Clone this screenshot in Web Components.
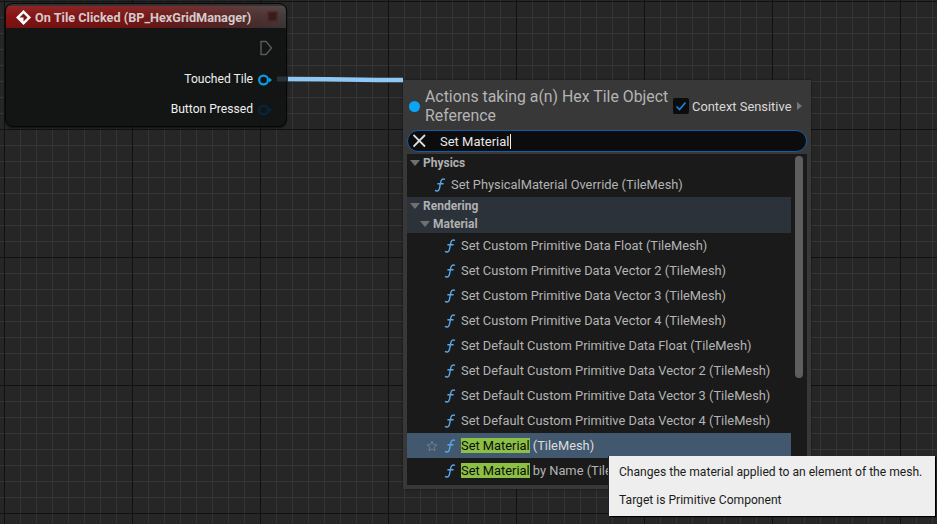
<!DOCTYPE html>
<html>
<head>
<meta charset="utf-8">
<title>Blueprint graph</title>
<style>
  html, body { margin: 0; height: 100%; background: #262626; overflow: hidden; }
</style>
</head>
<body>
<graph-canvas>
  <event-node title="On Tile Clicked (BP_HexGridManager)">
    <node-pin kind="exec"></node-pin>
    <node-pin kind="linked">Touched Tile</node-pin>
    <node-pin kind="dim">Button Pressed</node-pin>
  </event-node>
  <action-menu heading="Actions taking a(n) Hex Tile Object Reference" query="Set Material">
    <action-category label="Physics"></action-category>
    <action-row indent="1" label="Set PhysicalMaterial Override (TileMesh)"></action-row>
    <action-category label="Rendering" active></action-category>
    <action-category label="Material" level="1" active></action-category>
    <action-row label="Set Custom Primitive Data Float (TileMesh)"></action-row>
    <action-row label="Set Custom Primitive Data Vector 2 (TileMesh)"></action-row>
    <action-row label="Set Custom Primitive Data Vector 3 (TileMesh)"></action-row>
    <action-row label="Set Custom Primitive Data Vector 4 (TileMesh)"></action-row>
    <action-row label="Set Default Custom Primitive Data Float (TileMesh)"></action-row>
    <action-row label="Set Default Custom Primitive Data Vector 2 (TileMesh)"></action-row>
    <action-row label="Set Default Custom Primitive Data Vector 3 (TileMesh)"></action-row>
    <action-row label="Set Default Custom Primitive Data Vector 4 (TileMesh)"></action-row>
    <action-row selected match="Set Material" label=" (TileMesh)"></action-row>
    <action-row match="Set Material" label=" by Name (TileMesh)"></action-row>
  </action-menu>
  <hover-tip>
    <span>Changes the material applied to an element of the mesh.</span>
    <span>Target is Primitive Component</span>
  </hover-tip>
</graph-canvas>

<script>
// fondo del grafo: rejilla de 16px con lineas mayores cada 128px
class GraphCanvas extends HTMLElement {
  constructor() {
    super();
    this.attachShadow({ mode: 'open' }).innerHTML = `
      <style>
        :host {
          display: block; position: relative; width: 937px; height: 524px; overflow: hidden;
          font-family: Roboto, "Liberation Sans", sans-serif;
          background-color: #262626;
          background-image:
            linear-gradient(90deg, #111 1px, transparent 1px),
            linear-gradient(#111 1px, transparent 1px),
            linear-gradient(90deg, #353535 1px, transparent 1px),
            linear-gradient(#353535 1px, transparent 1px);
          background-size: 128px 128px, 128px 128px, 16px 16px, 16px 16px;
          background-position: 4px 1px, 4px 1px, 4px 1px, 4px 1px;
        }
        svg { position: absolute; left: 0; top: 0; z-index: 1; pointer-events: none; }
      </style>
      <slot></slot>
      <svg width="937" height="524">
        <path d="M277 79 H288" stroke="#26323c" stroke-width="5" fill="none"/>
        <path d="M288 79 C330 79 360 80 403 80" stroke="#8fc8f5" stroke-width="4.5" fill="none"/>
      </svg>`;
  }
}

class EventNode extends HTMLElement {
  constructor() {
    super();
    this.attachShadow({ mode: 'open' }).innerHTML = `
      <style>
        :host {
          display: block; position: absolute; left: 5px; top: 3px; width: 282px; height: 124px;
          box-sizing: border-box; background: #131514; border: 1px solid #070707; border-radius: 8px;
          box-shadow: 0 1px 2px rgba(0,0,0,.6); overflow: hidden; color: #f0f0f0;
        }
        .head {
          display: flex; align-items: center; height: 22px; margin-top: 2px; padding-left: 10px; gap: 4px;
          background:
            linear-gradient(rgba(255,255,255,.07), transparent 45%, rgba(0,0,0,.16)),
            linear-gradient(90deg, #8a1414 0%, #7c1717 45%, #5a2a2a 80%, #423d3d 100%);
          box-shadow: 0 -2px 0 #333;
          font-size: 12.7px; font-weight: 700; color: #d4cbcb;
        }
        .head span { flex: 1; white-space: nowrap; }
        .stop { width: 7px; height: 7px; margin: -2px 8px 0 0; background: #282222; border: 2px solid #5e1f1f; border-radius: 2px; }
        .pins { display: flex; flex-direction: column; align-items: flex-end; padding: 4px 13px 0 0; }
      </style>
      <div class="head">
        <svg width="15" height="15" viewBox="0 0 15 15">
          <path d="M7.5 0 L15 7.5 L7.5 15 L0 7.5 Z" fill="#fff"/>
          <path d="M7.5 3.5 L11.5 7.5 L7.5 11.5 L7.5 7.5 L3.5 7.5 Z" fill="#7c1717"/>
        </svg>
        <span></span>
        <div class="stop"></div>
      </div>
      <div class="pins"><slot></slot></div>`;
    this.shadowRoot.querySelector('span').textContent = this.getAttribute('title');
    this.removeAttribute('title');
  }
}

class NodePin extends HTMLElement {
  constructor() {
    super();
    const kind = this.getAttribute('kind');
    const color = kind === 'linked' ? '#0b9be6' : '#06263f';
    const icon = kind === 'exec'
      ? `<svg width="14" height="16" viewBox="0 0 14 16"><path d="M2 1.5 H7 L12.5 8 L7 14.5 H2 Z" fill="none" stroke="#5a5a5a" stroke-width="1.4"/></svg>`
      : `<svg width="15" height="12" viewBox="0 0 15 12"><circle cx="5.5" cy="6" r="4.4" fill="none" stroke="${color}" stroke-width="2.2"/><path d="M11 3.6 L14 6 L11 8.4 Z" fill="${color}"/></svg>`;
    this.attachShadow({ mode: 'open' }).innerHTML = `
      <style>
        :host { display: flex; align-items: center; justify-content: flex-end; gap: 5px; height: 31px; font-size: 12.1px; color: #f0f0f0; }
        :host([kind="exec"]) { height: 32px; }
        :host([kind="dim"]) { height: 30px; }
        slot { display: block; margin-top: -2px; }
      </style>
      <slot></slot>${icon}`;
  }
}

class ActionMenu extends HTMLElement {
  constructor() {
    super();
    this.attachShadow({ mode: 'open' }).innerHTML = `
      <style>
        :host {
          display: flex; flex-direction: column; position: absolute; left: 403px; top: 80px; width: 408px; height: 409px;
          box-sizing: border-box; padding: 4px; background: #383838; color: #c0c0c0;
          box-shadow: 0 0 2px rgba(0,0,0,.5);
        }
        .top { display: flex; align-items: center; box-sizing: border-box; height: 46px; padding-bottom: 2px; }
        .dot { flex: none; width: 11px; height: 11px; margin: 0 5px 0 2px; border-radius: 50%; background: #0aa5f5; }
        h1 { flex: none; width: 247px; margin: 0; font-size: 15.85px; font-weight: 400; line-height: 19px; color: #b4b4b4; }
        .ctx { display: flex; align-items: center; gap: 3px; margin-left: 1px; font-size: 12.9px; color: #d8d8d8; white-space: nowrap; }
        .check { display: flex; width: 16px; height: 16px; background: #0c0c0c; border-radius: 2px; align-items: center; justify-content: center; }
        .more { width: 0; height: 0; margin-left: 3px; border-left: 5px solid #777; border-top: 4.5px solid transparent; border-bottom: 4.5px solid transparent; }
        .search {
          display: flex; align-items: center; box-sizing: border-box; height: 22px; padding-left: 5px;
          background: #0c0c0c; border: 1px solid #0e5ea8; border-radius: 11px; font-size: 13px; color: #e6e6e6;
        }
        .search svg { margin-right: 13px; }
        .caret { width: 1px; height: 15px; background: #f0f0f0; margin-left: 1px; }
        .list { position: relative; flex: 1; margin-top: 2px; background: #1a1a1a; overflow: hidden; padding-right: 16px; }
        .bar { position: absolute; right: 4px; top: 2px; width: 8px; height: 222px; background: #5e5e5e; border-radius: 4px; }
      </style>
      <div class="top">
        <div class="dot"></div>
        <h1></h1>
        <div class="ctx">
          <div class="check"><svg width="12" height="12" viewBox="0 0 12 12"><path d="M1.5 6.5 L4.5 9.5 L10.5 2.5" fill="none" stroke="#1c7fe0" stroke-width="1.7"/></svg></div>
          <span>Context Sensitive</span>
          <div class="more"></div>
        </div>
      </div>
      <div class="search">
        <svg width="14" height="14" viewBox="0 0 14 14"><path d="M.5 1 L12 12.5 M12 1 L.5 12.5" stroke="#dcdcdc" stroke-width="1.8"/></svg>
        <span class="q"></span><div class="caret"></div>
      </div>
      <div class="list"><slot></slot><div class="bar"></div></div>`;
    this.shadowRoot.querySelector('h1').textContent = this.getAttribute('heading');
    this.shadowRoot.querySelector('.q').textContent = this.getAttribute('query');
  }
}

class ActionCategory extends HTMLElement {
  constructor() {
    super();
    const level = Number(this.getAttribute('level') || 0);
    this.attachShadow({ mode: 'open' }).innerHTML = `
      <style>
        :host { display: flex; align-items: center; height: 18px; padding-left: ${3 + level * 10}px; font-size: 12px; font-weight: 700; color: #b0b0b0; }
        :host([active]) { background: #2c323a; }
        i { width: 0; height: 0; margin-right: 3px; border-top: 6px solid #707070; border-left: 5px solid transparent; border-right: 5px solid transparent; }
      </style>
      <i></i><span></span>`;
    this.shadowRoot.querySelector('span').textContent = this.getAttribute('label');
  }
}

class ActionRow extends HTMLElement {
  constructor() {
    super();
    const left = this.getAttribute('indent') ? 27 : 37;
    const match = this.getAttribute('match');
    this.attachShadow({ mode: 'open' }).innerHTML = `
      <style>
        :host { display: flex; align-items: center; height: 25px; padding-left: ${left}px; font-size: 12.85px; color: #b4b4b4; white-space: pre; position: relative; }
        :host([selected]) { background: #42586f; color: #dcdcdc; }
        .f { flex: none; margin-right: 5px; }
        mark { background: #8bc045; color: #0c0c0c; line-height: 15px; }
        .star { position: absolute; left: 19px; top: 7px; }
      </style>
      ${this.hasAttribute('selected') ? '<svg class="star" width="12" height="12" viewBox="0 0 12 12"><path d="M6 1.2 L7.4 4.6 L11 4.9 L8.2 7.2 L9.1 10.8 L6 8.9 L2.9 10.8 L3.8 7.2 L1 4.9 L4.6 4.6 Z" fill="none" stroke="#6f7f90" stroke-width="1"/></svg>' : ''}
      <svg class="f" width="12" height="14" viewBox="0 0 12 14"><path d="M11 1.4 C8.6 .4 7.4 1.4 6.9 3.4 L5.4 10.6 C4.9 12.8 3.2 13.6 1 12.4 M3.4 5.7 H9.6" fill="none" stroke="#58a8e8" stroke-width="1.4"/></svg>
      ${match ? '<mark></mark>' : ''}<span class="t"></span>`;
    if (match) this.shadowRoot.querySelector('mark').textContent = match;
    this.shadowRoot.querySelector('.t').textContent = this.getAttribute('label');
  }
}

class HoverTip extends HTMLElement {
  constructor() {
    super();
    this.attachShadow({ mode: 'open' }).innerHTML = `
      <style>
        :host {
          display: flex; flex-direction: column; justify-content: space-between; position: absolute; left: 609px; top: 456px; width: 326px; height: 60px;
          box-sizing: border-box; padding: 9px 10px 8px; background: #eeeeee; color: #1c1c1c; font-size: 12.1px; white-space: nowrap;
          box-shadow: 1px 1px 1px #000, -1px 0 0 #222;
        }
        ::slotted(span) { display: block; line-height: 15px; }
      </style>
      <slot></slot>`;
  }
}

customElements.define('graph-canvas', GraphCanvas);
customElements.define('event-node', EventNode);
customElements.define('node-pin', NodePin);
customElements.define('action-menu', ActionMenu);
customElements.define('action-category', ActionCategory);
customElements.define('action-row', ActionRow);
customElements.define('hover-tip', HoverTip);
</script>
</body>
</html>
